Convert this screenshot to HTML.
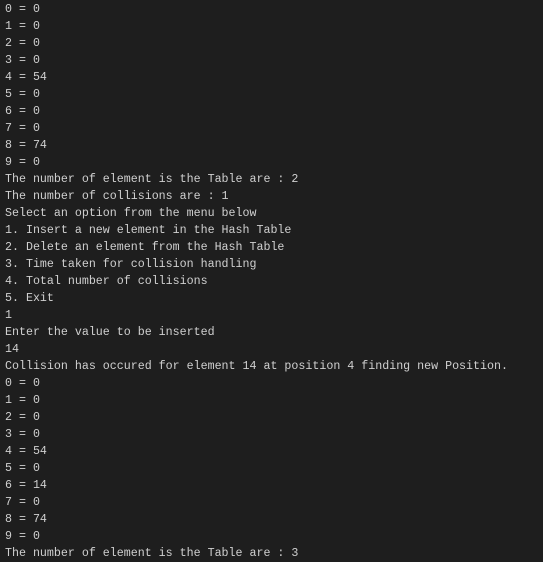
<!DOCTYPE html>
<html><head><style>
html,body{margin:0;padding:0;background:#1e1e1e;width:543px;height:550px;overflow:hidden}
pre{margin:0;position:absolute;left:5px;top:0.5px;font-family:"Liberation Mono",monospace;font-size:11.65px;line-height:17px;color:#d0d0d0}
</style></head><body><pre>0 = 0
1 = 0
2 = 0
3 = 0
4 = 54
5 = 0
6 = 0
7 = 0
8 = 74
9 = 0
The number of element is the Table are : 2
The number of collisions are : 1
Select an option from the menu below
1. Insert a new element in the Hash Table
2. Delete an element from the Hash Table
3. Time taken for collision handling
4. Total number of collisions
5. Exit
1
Enter the value to be inserted
14
Collision has occured for element 14 at position 4 finding new Position.
0 = 0
1 = 0
2 = 0
3 = 0
4 = 54
5 = 0
6 = 14
7 = 0
8 = 74
9 = 0
The number of element is the Table are : 3</pre></body></html>
